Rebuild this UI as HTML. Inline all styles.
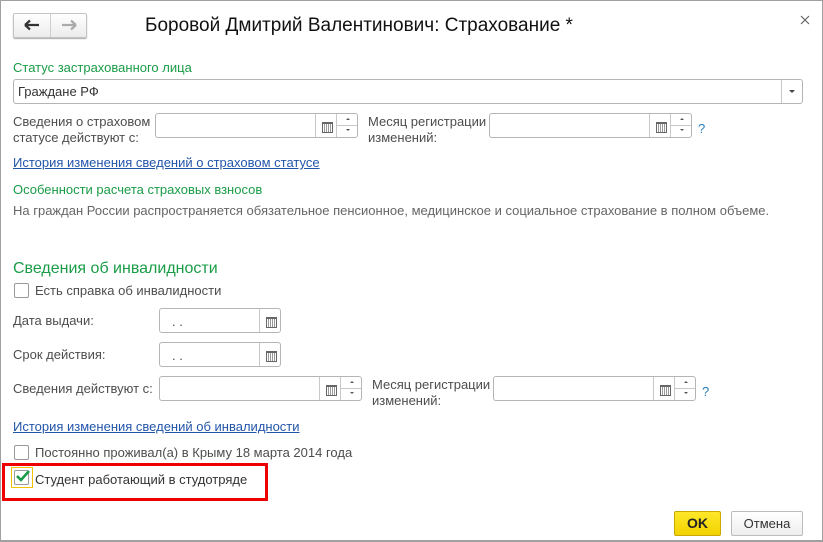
<!DOCTYPE html>
<html><head><meta charset="utf-8"><style>
*{box-sizing:border-box;margin:0;padding:0}
body{width:823px;height:542px;background:#fff;font-family:"Liberation Sans",Arial,sans-serif;font-size:13px;color:#4d4d4d;position:relative;overflow:hidden}
.win{position:absolute;left:0;top:0;width:823px;height:542px;border:1px solid #a0a0a0;border-bottom:2px solid #a0a0a0}
.a{position:absolute;white-space:nowrap}
.g{color:#1a9c47}
.lnk{color:#2255aa;text-decoration:underline;text-decoration-color:#2255aa}
.inp{position:absolute;border:1px solid #b5b5b5;border-radius:3px;background:#fff;height:25px}
.cal{position:absolute;top:0;bottom:0;width:21px;border-left:1px solid #c8c8c8}
.cal:after{content:"";position:absolute;left:6px;top:8px;width:9px;height:8px;border:1px solid #666;border-top-width:2px;background:repeating-linear-gradient(90deg,#fff 0 1px,#999 1px 2px)}
.dd{position:absolute;top:0;bottom:0;right:0;width:21px;border-left:1px solid #c8c8c8}
.dd:after{content:"";position:absolute;left:7px;top:10px;border-left:3px solid transparent;border-right:3px solid transparent;border-top:3px solid #444}
.sp{position:absolute;top:0;bottom:0;width:21px;border-left:1px solid #c8c8c8}
.sp:before{content:"";position:absolute;left:0;right:0;top:11px;border-top:1px solid #c8c8c8}
.sp i{position:absolute;left:9px;width:0;height:0;border-left:2px solid transparent;border-right:2px solid transparent}
.cb{position:absolute;width:15px;height:15px;border:1px solid #9a9a9a;border-radius:2px;background:#fff}
.q{position:absolute;color:#2a7fc0;font-size:13px}
</style></head><body>
<div class="win"></div>
<div class="a" style="left:13px;top:13px;width:74px;height:25px;border:1px solid #c4c4c4;border-radius:2px;background:linear-gradient(#fff,#ececec);box-shadow:0 1px 1px #aaa"></div>
<div class="a" style="left:50px;top:14px;width:1px;height:23px;background:#cfcfcf"></div>
<svg class="a" style="left:24px;top:19px" width="16" height="12"><path d="M1 6H15M1 6L6 1.5M1 6L6 10.5" stroke="#333" stroke-width="2.2" fill="none"/></svg>
<svg class="a" style="left:61px;top:19px" width="16" height="12"><path d="M1 6H15M15 6L10 1.5M15 6L10 10.5" stroke="#aaa" stroke-width="2.2" fill="none"/></svg>
<div class="a" style="left:145px;top:15px;font-size:19px;color:#111">Боровой Дмитрий Валентинович: Страхование *</div>
<svg class="a" style="left:800px;top:15px" width="10" height="10"><path d="M1 1L9 9M9 1L1 9" stroke="#666" stroke-width="1.2"/></svg>

<div class="a g" style="left:13px;top:60px">Статус застрахованного лица</div>
<div class="inp" style="left:13px;top:79px;width:790px">
<div class="a" style="left:4px;top:4px;color:#333">Граждане РФ</div>
<div class="dd"></div>
</div>

<div class="a" style="left:13px;top:114px;line-height:16px">Сведения о страховом<br>статусе действуют с:</div>
<div class="inp" style="left:155px;top:113px;width:203px"><div class="cal" style="left:159px"></div><div class="sp" style="left:180px"><i style="top:4px;border-bottom:2px solid #555"></i><i style="top:15px;border-top:2px solid #555"></i></div></div>
<div class="a" style="left:368px;top:114px;line-height:16px">Месяц регистрации<br>изменений:</div>
<div class="inp" style="left:489px;top:113px;width:203px"><div class="cal" style="left:159px"></div><div class="sp" style="left:180px"><i style="top:4px;border-bottom:2px solid #555"></i><i style="top:15px;border-top:2px solid #555"></i></div></div>
<div class="q" style="left:698px;top:121px">?</div>

<div class="a lnk" style="left:13px;top:155px">История изменения сведений о страховом статусе</div>
<div class="a g" style="left:13px;top:182px">Особенности расчета страховых взносов</div>
<div class="a" style="left:13px;top:203px;font-size:13px;color:#666">На граждан России распространяется обязательное пенсионное, медицинское и социальное страхование в полном объеме.</div>

<div class="a g" style="left:13px;top:260px;font-size:16px">Сведения об инвалидности</div>
<div class="cb" style="left:14px;top:283px"></div>
<div class="a" style="left:35px;top:283px">Есть справка об инвалидности</div>

<div class="a" style="left:13px;top:313px">Дата выдачи:</div>
<div class="inp" style="left:159px;top:308px;width:122px"><div class="a" style="left:12px;top:5px">. .</div><div class="cal" style="left:99px"></div></div>
<div class="a" style="left:13px;top:347px">Срок действия:</div>
<div class="inp" style="left:159px;top:342px;width:122px"><div class="a" style="left:12px;top:5px">. .</div><div class="cal" style="left:99px"></div></div>

<div class="a" style="left:13px;top:381px">Сведения действуют с:</div>
<div class="inp" style="left:159px;top:376px;width:203px"><div class="cal" style="left:159px"></div><div class="sp" style="left:180px"><i style="top:4px;border-bottom:2px solid #555"></i><i style="top:15px;border-top:2px solid #555"></i></div></div>
<div class="a" style="left:372px;top:377px;line-height:16px">Месяц регистрации<br>изменений:</div>
<div class="inp" style="left:493px;top:376px;width:203px"><div class="cal" style="left:159px"></div><div class="sp" style="left:180px"><i style="top:4px;border-bottom:2px solid #555"></i><i style="top:15px;border-top:2px solid #555"></i></div></div>
<div class="q" style="left:702px;top:384px">?</div>

<div class="a lnk" style="left:13px;top:419px">История изменения сведений об инвалидности</div>
<div class="cb" style="left:14px;top:445px"></div>
<div class="a" style="left:35px;top:445px">Постоянно проживал(а) в Крыму 18 марта 2014 года</div>

<div class="a" style="left:2px;top:463px;width:266px;height:38px;border:3px solid #ee0000"></div>
<div class="a" style="left:11px;top:467px;width:22px;height:21px;border:1px solid #f0c400"></div>
<div class="cb" style="left:14px;top:470px"></div>
<svg class="a" style="left:15px;top:469px" width="16" height="14"><path d="M2 7L6 11L14 2" stroke="#1a9c47" stroke-width="2.6" fill="none"/></svg>
<div class="a" style="left:35px;top:472px;color:#333">Студент работающий в студотряде</div>

<div class="a" style="left:674px;top:511px;width:47px;height:25px;border:1px solid #c9a800;border-radius:2px;background:linear-gradient(#ffe82a,#f2d200);text-align:center;line-height:23px;font-weight:bold;color:#222;font-size:14px">OK</div>
<div class="a" style="left:731px;top:511px;width:72px;height:25px;border:1px solid #bcbcbc;border-radius:2px;background:linear-gradient(#fff,#eee);text-align:center;line-height:23px;color:#333">Отмена</div>
</body></html>
